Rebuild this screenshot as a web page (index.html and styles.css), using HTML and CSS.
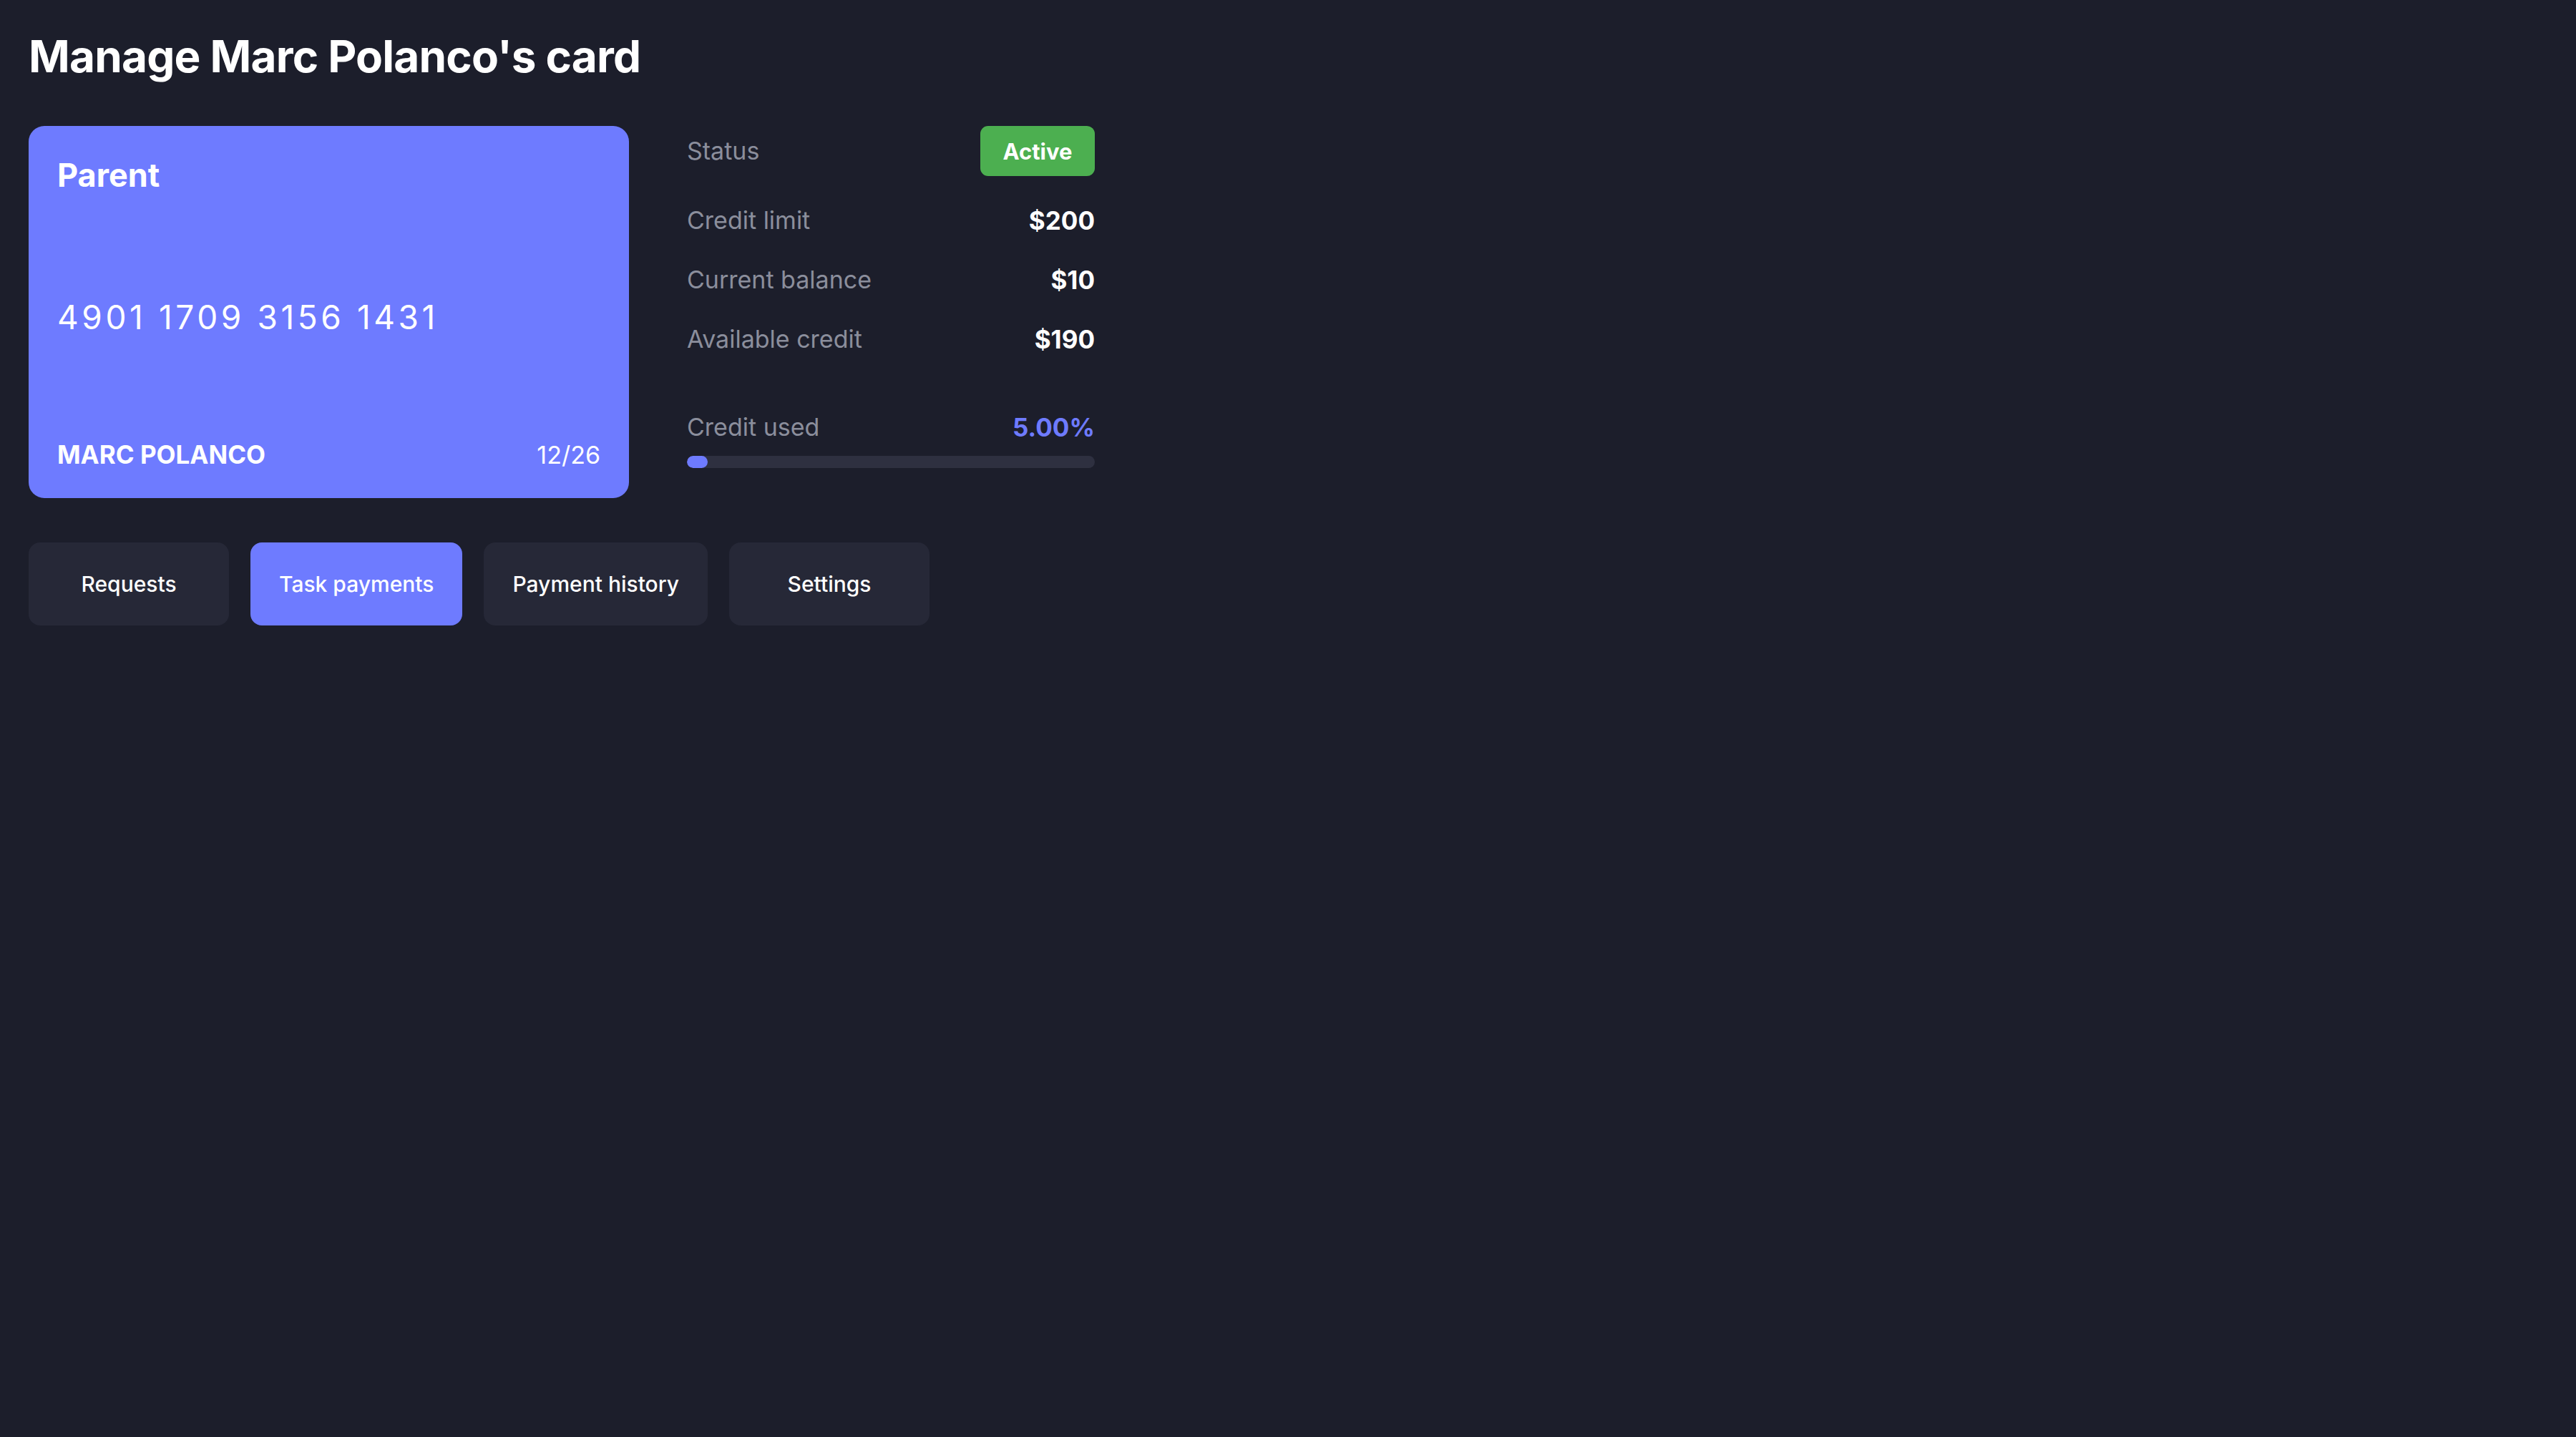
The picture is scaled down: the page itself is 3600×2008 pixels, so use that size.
FILE: index.html
```html
<!DOCTYPE html>
<html lang="en">
<head>
<meta charset="utf-8">
<title>Manage Marc Polanco's card</title>
<link rel="stylesheet" href="styles.css">
</head>
<body>
<main class="page">
  <h1 class="title">Manage Marc Polanco's card</h1>
  <section class="overview">
    <div class="card">
      <div class="card-label">Parent</div>
      <div class="card-number">4901 1709 3156 1431</div>
      <div class="card-bottom">
        <span class="card-name">MARC POLANCO</span>
        <span class="card-exp">12/26</span>
      </div>
    </div>
    <div class="details">
      <div class="row row-status">
        <span class="label">Status</span>
        <span class="badge">Active</span>
      </div>
      <div class="row">
        <span class="label">Credit limit</span>
        <span class="value">$200</span>
      </div>
      <div class="row">
        <span class="label">Current balance</span>
        <span class="value">$10</span>
      </div>
      <div class="row">
        <span class="label">Available credit</span>
        <span class="value">$190</span>
      </div>
      <div class="usage">
        <div class="row">
          <span class="label">Credit used</span>
          <span class="value accent">5.00%</span>
        </div>
        <div class="track"><div class="fill" style="width:5%"></div></div>
      </div>
    </div>
  </section>
  <nav class="tabs">
    <button class="tab">Requests</button>
    <button class="tab active">Task payments</button>
    <button class="tab">Payment history</button>
    <button class="tab">Settings</button>
  </nav>
</main>
</body>
</html>
```
FILE: styles.css
```css
* { box-sizing: border-box; }
html, body {
  margin: 0;
  padding: 0;
  background: #1c1e2b;
  height: 100%;
}
body {
  font-family: Inter, "Noto Sans", "Liberation Sans", sans-serif;
  color: #ffffff;
}
.page {
  padding: 42px 40px;
}
.title {
  margin: 0;
  font-size: 62px;
  font-weight: 700;
  line-height: 1.2;
  letter-spacing: -0.8px;
}
.overview {
  margin-top: 60px;
  display: flex;
  gap: 81px;
  align-items: flex-start;
}
.card {
  width: 839px;
  height: 520px;
  background: #6e7bff;
  border-radius: 22px;
  padding: 40px;
  display: flex;
  flex-direction: column;
  justify-content: space-between;
}
.card-label {
  font-size: 45px;
  font-weight: 700;
  line-height: 1.2;
  margin-top: 2px;
}
.card-number {
  font-size: 46px;
  font-weight: 400;
  letter-spacing: 4.6px;
  line-height: 1.2;
  margin-top: 2px;
}
.card-bottom {
  display: flex;
  justify-content: space-between;
  align-items: baseline;
  line-height: 1.2;
}
.card-name {
  font-size: 35px;
  font-weight: 700;
}
.card-exp {
  font-size: 34px;
  font-weight: 400;
}
.details {
  width: 570px;
  display: flex;
  flex-direction: column;
  gap: 41px;
}
.row {
  display: flex;
  justify-content: space-between;
  align-items: center;
  line-height: 1.2;
}
.label {
  font-size: 34px;
  color: #8b8e9c;
}
.value {
  font-size: 35px;
  font-weight: 700;
  color: #ffffff;
}
.value.accent {
  color: #6e7bff;
}
.badge {
  background: #4caf50;
  color: #ffffff;
  font-size: 31px;
  font-weight: 700;
  height: 70px;
  width: 160px;
  border-radius: 11px;
  display: flex;
  align-items: center;
  justify-content: center;
}
.usage {
  margin-top: 40px;
  display: flex;
  flex-direction: column;
  gap: 19px;
}
.track {
  height: 17px;
  background: #2e3040;
  border-radius: 9px;
  overflow: hidden;
}
.fill {
  height: 100%;
  background: #6e7bff;
  border-radius: 9px;
}
.tabs {
  margin-top: 62px;
  display: flex;
  gap: 30px;
}
.tab {
  font-family: inherit;
  font-size: 30px;
  font-weight: 500;
  line-height: 1.2;
  color: #ffffff;
  background: #262837;
  border: none;
  border-radius: 16px;
  padding: 40px 40px;
  min-width: 280px;
  cursor: pointer;
}
.tab.active {
  background: #6e7bff;
}
```
